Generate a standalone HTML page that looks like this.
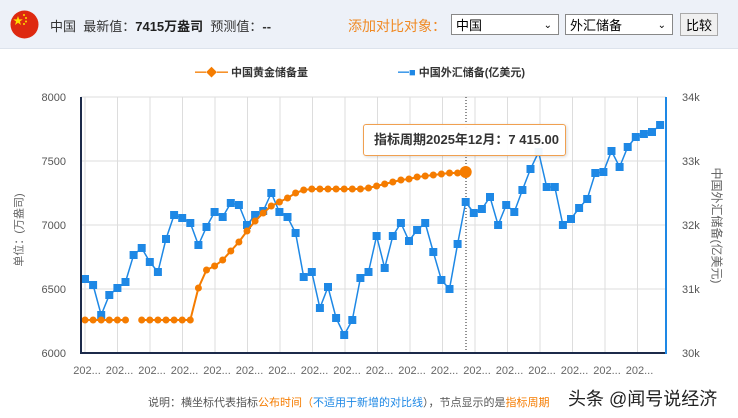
<!DOCTYPE html>
<html><head><meta charset="utf-8"><style>
body{margin:0;width:738px;height:418px;overflow:hidden;background:#fff;font-family:"Liberation Sans","Noto Sans CJK SC",sans-serif;position:relative}
.hdr{position:absolute;left:0;top:0;width:738px;height:48px;background:#edf1f8;border-bottom:1px solid #dde3ec}
.t{position:absolute;white-space:nowrap}
.sel{position:absolute;top:14px;height:21px;background:#fff;border:1px solid #888;font-size:13px;line-height:21px;padding-left:4px;box-sizing:border-box;color:#000}
.sel span{position:absolute;right:6px;top:0;font-size:10px}
</style></head><body>
<div class="hdr"></div>
<svg class="t" style="left:10px;top:10px" width="29" height="29" viewBox="0 0 29 29"><circle cx="14.5" cy="14.5" r="14" fill="#de2910"/><polygon points="8,6 9.2,9.4 12.8,9.4 9.9,11.5 11,15 8,12.8 5,15 6.1,11.5 3.2,9.4 6.8,9.4" fill="#ffde00"/><circle cx="14" cy="5" r="1" fill="#ffde00"/><circle cx="16" cy="8" r="1" fill="#ffde00"/><circle cx="16" cy="11.5" r="1" fill="#ffde00"/><circle cx="14" cy="14" r="1" fill="#ffde00"/></svg>
<div class="t" style="left:50px;top:16px;font-size:13px;color:#333">中国 &nbsp;最新值：<b style="color:#222">7415万盎司</b> &nbsp;预测值：<b>--</b></div>
<div class="t" style="left:348px;top:16px;font-size:14px;color:#f08a24">添加对比对象：</div>
<div class="sel" style="left:451px;width:108px">中国<span>⌄</span></div>
<div class="sel" style="left:565px;width:108px">外汇储备<span>⌄</span></div>
<div class="t" style="left:680px;top:13px;width:38px;height:23px;border:1px solid #aaa;background:#f0f0f0;font-size:13px;line-height:23px;text-align:center;box-sizing:border-box">比较</div>
<svg class="t" style="left:0;top:0" width="738" height="418" id="c"></svg>
<div class="t" style="left:195px;top:64px;font-size:11px;font-weight:bold;color:#333"><span style="color:#f57c00">━◆━</span> 中国黄金储备量</div>
<div class="t" style="left:398px;top:64px;font-size:11px;font-weight:bold;color:#333"><span style="color:#1e88e5">━■</span> 中国外汇储备(亿美元)</div>
<div class="t" style="left:-18px;top:222px;font-size:11px;color:#666;transform:rotate(-90deg);transform-origin:center">单位：(万盎司)</div>
<div class="t" style="left:662px;top:214px;font-size:12px;color:#666;transform:rotate(90deg);transform-origin:center;width:110px">中国外汇储备(亿美元)</div>
<div class="t" style="left:363px;top:124px;width:203px;height:32px;border:1px solid #f0a050;border-radius:3px;background:rgba(255,255,255,.93);font-size:13px;font-weight:bold;color:#333;line-height:30px;padding-left:10px;box-sizing:border-box;box-shadow:1px 1px 3px rgba(0,0,0,.15)">指标周期2025年12月：7 415.00</div>
<div class="t" style="left:148px;top:394px;font-size:11px;color:#555">说明：横坐标代表指标<span style="color:#f57c00">公布时间（</span><span style="color:#1e88e5">不适用于新增的对比线</span>），节点显示的是<span style="color:#f57c00">指标周期</span></div>
<div class="t" style="left:568px;top:385px;font-size:18px;color:#222;text-shadow:0 0 2px #fff">头条 @闻号说经济</div>
<script>
var s=document.getElementById('c'),h='';
for(var i=0;i<5;i++){var y=97+i*64;h+='<line x1="81" x2="666" y1="'+y+'" y2="'+y+'" stroke="#ddd"/>';h+='<text x="66" y="'+(y+4)+'" text-anchor="end" font-size="11" fill="#555">'+(8000-i*500)+'</text><text x="682" y="'+(y+4)+'" font-size="11" fill="#555">'+(34-i)+'k</text>';}
for(var k=0;k<18;k++){var x=85+k*32.5;h+='<line x1="'+x+'" x2="'+x+'" y1="97" y2="353" stroke="#ddd"/><text x="'+(x+2)+'" y="374" text-anchor="middle" font-size="11" fill="#666">202...</text>';}
h+='<line x1="466" x2="466" y1="97" y2="353" stroke="#222" stroke-dasharray="1,2"/>';
var B=[279,285,315,295,288,282,255,248,262,272,239,215,218,223,245,227,212,217,203,205,225,215,211,193,212,217,233,277,272,308,287,318,335,320,278,272,236,268,236,223,241,230,223,252,280,289,244,202,213,209,197,225,205,212,190,169,152,187,187,225,219,208,199,173,172,151,167,147,137,134,132,125];
var p='',m='';B.forEach(function(y,i){var x=85+i*8.1;p+=x+','+y+' ';m+='<rect x="'+(x-4)+'" y="'+(y-4)+'" width="8" height="8" fill="#1e88e5"/>';});
h+='<polyline points="'+p+'" fill="none" stroke="#1e88e5" stroke-width="1.5"/>'+m;
var O=[320,320,320,320,320,320,null,320,320,320,320,320,320,320,288,270,266,260,251,242,231,221,213,206,202,198,193,190,189,189,189,189,189,189,189,188,186,184,182,180,179,177,176,175,174,173,173,172];
var seg='',mo='',lines=[];O.forEach(function(y,i){var x=85+i*8.1;if(y==null){lines.push(seg);seg='';return;}seg+=x+','+y+' ';mo+='<circle cx="'+x+'" cy="'+y+'" r="'+(i==O.length-1?6:3.5)+'" fill="#f57c00"/>';});lines.push(seg);
lines.forEach(function(l){h+='<polyline points="'+l+'" fill="none" stroke="#f57c00" stroke-width="2"/>';});h+=mo;
h+='<line x1="81" x2="81" y1="97" y2="354" stroke="#1c2a4a" stroke-width="2"/><line x1="80" x2="666" y1="353" y2="353" stroke="#1c2a4a" stroke-width="2"/><line x1="666" x2="666" y1="97" y2="354" stroke="#1e88e5" stroke-width="2"/>';
s.innerHTML=h;
</script>
</body></html>
